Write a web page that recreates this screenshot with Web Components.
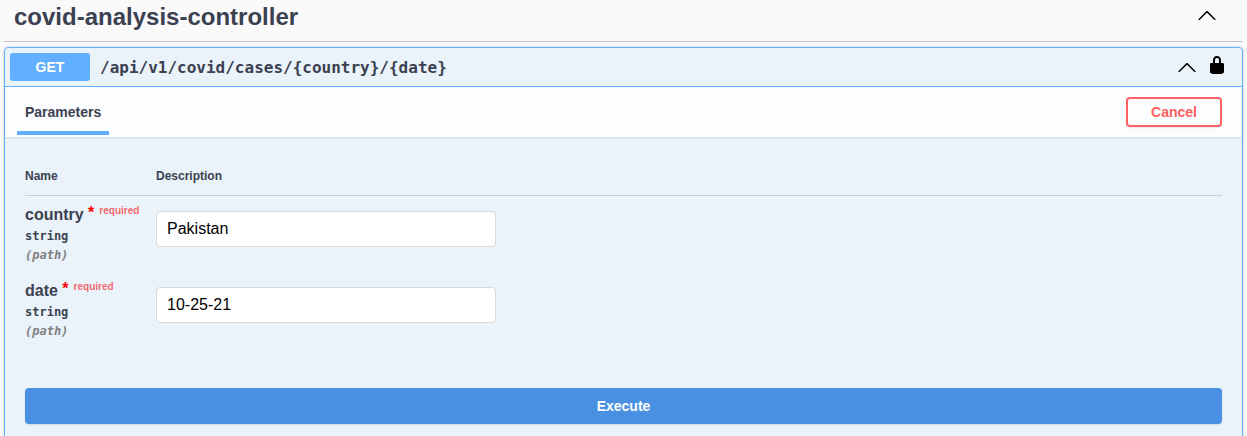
<!DOCTYPE html>
<html lang="en">
<head>
<meta charset="utf-8">
<title>covid-analysis-controller</title>
<style>
  html, body { margin: 0; height: 436px; overflow: hidden; }
  body { background: #fafafa; color: #3b4151; font-family: "Liberation Sans", Arial, sans-serif; }
</style>
</head>
<body>
<swagger-section>
  <span slot="title">covid-analysis-controller</span>
  <op-block method="GET" path="/api/v1/covid/cases/{country}/{date}">
    <param-row name="country" type="string" in="(path)" value="Pakistan"></param-row>
    <param-row name="date" type="string" in="(path)" value="10-25-21"></param-row>
  </op-block>
</swagger-section>

<script>
// icons are the ones from the swagger sprite
const chevronUp = `<svg width="20" height="20" viewBox="0 0 20 20" aria-hidden="true"><path d="M17.418 14.908c.272.268.709.268.979 0s.271-.701 0-.969l-7.908-7.83c-.27-.268-.707-.268-.979 0l-7.908 7.83c-.27.268-.27.701 0 .969.271.268.709.268.979 0L10 7.797l7.418 7.111z"/></svg>`;
const lockIcon = `<svg width="20" height="20" viewBox="0 0 20 20" aria-hidden="true"><path d="M15.8 8H14V5.6C14 2.703 12.665 1 10 1 7.334 1 6 2.703 6 5.6V8H4c-.553 0-1 .646-1 1.199V17c0 .549.428 1.139.951 1.307l1.197.387C5.672 18.861 6.55 19 7.1 19h5.8c.549 0 1.428-.139 1.951-.307l1.196-.387c.524-.167.953-.757.953-1.306V9.199C17 8.646 16.352 8 15.8 8zM12 8H8V5.199C8 3.754 8.797 3 10 3c1.203 0 2 .754 2 2.199V8z"/></svg>`;

class SwaggerSection extends HTMLElement {
  constructor() {
    super();
    this.attachShadow({ mode: 'open' });
    this.shadowRoot.innerHTML = `
      <style>
        :host { display: block; padding: 0 4px; }
        .tag {
          display: flex;
          align-items: center;
          justify-content: space-between;
          height: 42px;
          padding: 0 26px 7px 10px;
          box-sizing: border-box;
          margin-bottom: 5px;
          border-bottom: 1px solid rgba(59,65,81,.3);
        }
        h3 { margin: 0; font-size: 24px; font-weight: 700; line-height: 34px; color: #3b4151; }
        svg { display: block; margin-bottom: 4px; }
      </style>
      <div class="tag">
        <h3><slot name="title"></slot></h3>
        ${chevronUp}
      </div>
      <slot></slot>
    `;
  }
}

class OpBlock extends HTMLElement {
  constructor() {
    super();
    this.attachShadow({ mode: 'open' });
    this.shadowRoot.innerHTML = `
      <style>
        :host {
          display: block;
          border: 1px solid #61affe;
          border-radius: 4px;
          background: rgba(97,175,254,.1);
          box-shadow: 0 0 3px rgba(0,0,0,.19);
          height: 420px;
        }
        .summary {
          display: flex;
          align-items: center;
          padding: 5px;
          border-bottom: 1px solid #61affe;
        }
        .method {
          min-width: 80px;
          padding: 6px 0;
          box-sizing: border-box;
          border-radius: 3px;
          background: #61affe;
          color: #fff;
          font-size: 14px;
          font-weight: 700;
          line-height: 16px;
          text-align: center;
        }
        .path {
          flex: 1;
          padding: 0 10px;
          font-family: "DejaVu Sans Mono", "Liberation Mono", monospace;
          font-size: 16px;
          font-weight: 700;
          color: #3b4151;
        }
        .lock { padding: 0 10px 4px; }
        svg { display: block; }
        .tabs {
          display: flex;
          align-items: center;
          justify-content: space-between;
          min-height: 50px;
          padding: 0 20px 0 12px;
          background: rgba(255,255,255,.8);
          box-shadow: 0 1px 2px rgba(0,0,0,.1);
        }
        .tab {
          align-self: stretch;
          box-sizing: border-box;
          display: flex;
          align-items: center;
          padding: 2px 8px 0;
          height: 44px;
          margin-bottom: 2px;
          margin-top: 4px;
          border-bottom: 4px solid #61affe;
          font-size: 14px;
          font-weight: 700;
          color: #3b4151;
        }
        .cancel {
          width: 96px;
          height: 30px;
          box-sizing: border-box;
          border: 2px solid #ff6060;
          border-radius: 4px;
          background: transparent;
          box-shadow: 0 1px 2px rgba(0,0,0,.1);
          color: #ff6060;
          font: 700 14px "Liberation Sans", Arial, sans-serif;
          padding: 0;
        }
        .params { padding: 20px 20px 0; }
        .head {
          display: grid;
          grid-template-columns: 131px 1fr;
          padding: 13px 0 12px;
          height: 13px;
          line-height: 13px;
          border-bottom: 1px solid rgba(59,65,81,.2);
          font-size: 12px;
          font-weight: 700;
          color: #3b4151;
        }
        .rows { display: block; }
        .execute-wrap { padding: 40px 20px 0; }
        .execute {
          display: block;
          width: 100%;
          height: 36px;
          border: 0;
          border-radius: 4px;
          background: #4990e2;
          box-shadow: 0 1px 2px rgba(0,0,0,.1);
          color: #fff;
          font: 700 14px "Liberation Sans", Arial, sans-serif;
        }
      </style>
      <div class="summary">
        <span class="method"></span>
        <span class="path"></span>
        ${chevronUp}
        <span class="lock">${lockIcon}</span>
      </div>
      <div class="tabs">
        <div class="tab">Parameters</div>
        <button class="cancel">Cancel</button>
      </div>
      <div class="params">
        <div class="head"><span>Name</span><span>Description</span></div>
        <div class="rows"><slot></slot></div>
      </div>
      <div class="execute-wrap"><button class="execute">Execute</button></div>
    `;
  }

  connectedCallback() {
    this.shadowRoot.querySelector('.method').textContent = this.getAttribute('method');
    this.shadowRoot.querySelector('.path').textContent = this.getAttribute('path');
  }
}

class ParamRow extends HTMLElement {
  constructor() {
    super();
    this.attachShadow({ mode: 'open' });
    this.shadowRoot.innerHTML = `
      <style>
        :host {
          display: grid;
          grid-template-columns: 131px 1fr;
          padding: 10px 0;
          height: 56px;
        }
        .name { font-size: 16px; font-weight: 700; color: #3b4151; line-height: 18px; }
        .star { color: red; position: relative; top: -2px; }
        .req { font-size: 10px; font-weight: 700; color: rgba(255,0,0,.6); position: relative; top: -6px; padding-left: 5px; }
        .type, .in {
          font-family: "DejaVu Sans Mono", "Liberation Mono", monospace;
          font-size: 12px;
          line-height: 14px;
          color: #3b4151;
        }
        .type { font-weight: 700; margin-top: 3px; }
        .in { font-style: italic; font-weight: 700; color: gray; margin-top: 5px; }
        input {
          display: block;
          width: 340px;
          height: 36px;
          box-sizing: border-box;
          margin: 5px 0;
          padding: 8px 10px;
          border: 1px solid #d9d9d9;
          border-radius: 4px;
          background: #fff;
          color: #000;
          font: 400 16px "Liberation Sans", Arial, sans-serif;
          outline: none;
        }
      </style>
      <div>
        <div class="name"><span class="label"></span><span class="star"> *</span><span class="req">required</span></div>
        <div class="type"></div>
        <div class="in"></div>
      </div>
      <div><input type="text"></div>
    `;
  }

  connectedCallback() {
    this.shadowRoot.querySelector('.label').textContent = this.getAttribute('name');
    this.shadowRoot.querySelector('.type').textContent = this.getAttribute('type');
    this.shadowRoot.querySelector('.in').textContent = this.getAttribute('in');
    this.shadowRoot.querySelector('input').value = this.getAttribute('value');
  }
}

customElements.define('swagger-section', SwaggerSection);
customElements.define('op-block', OpBlock);
customElements.define('param-row', ParamRow);
</script>
</body>
</html>
